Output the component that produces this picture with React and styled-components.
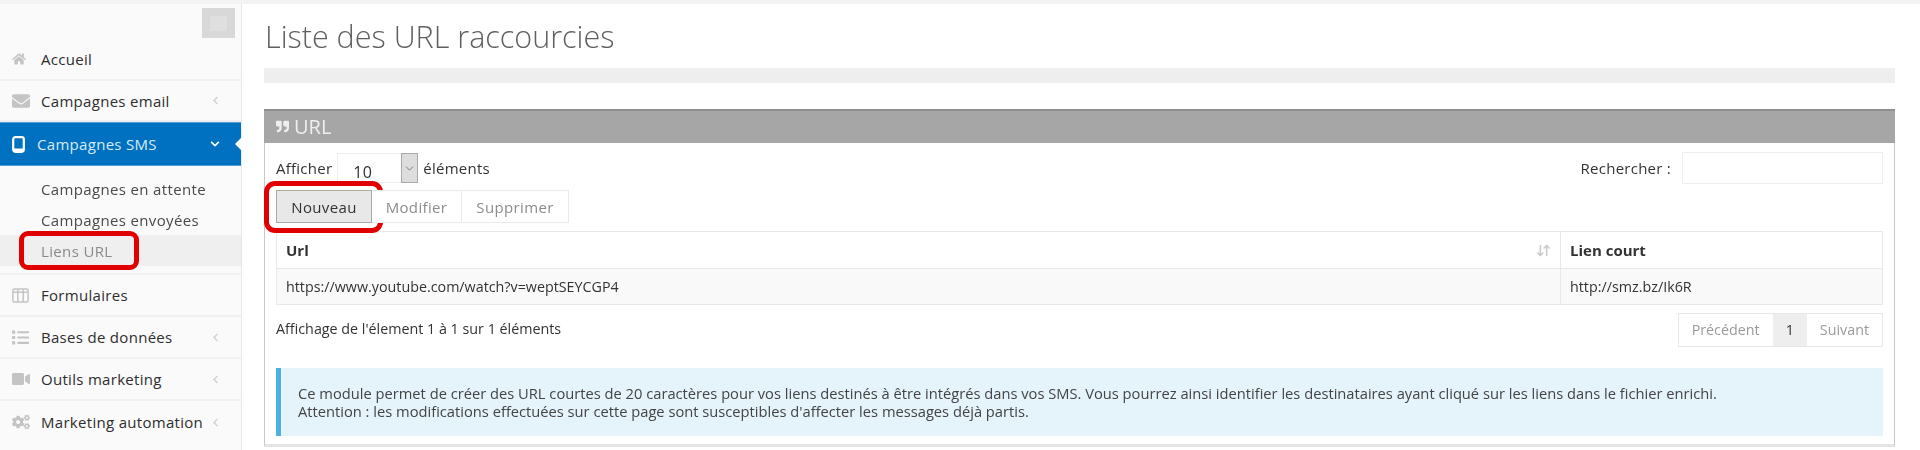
import React from "react";
import styled, { createGlobalStyle } from "styled-components";
import {
  FaHome,
  FaEnvelope,
  FaList,
  FaVideo,
  FaCogs,
  FaQuoteRight,
  FaChevronDown,
  FaChevronLeft,
} from "react-icons/fa";
import { ArrowDownUp, ChevronDown } from "lucide-react";

const GlobalStyle = createGlobalStyle`
  html, body {
    margin: 0;
    padding: 0;
    background: #fff;
    height: 450px;
    overflow: hidden;
  }
  body {
    font-family: "Open Sans", "Liberation Sans", sans-serif;
    font-size: 14.4px;
    color: #333;
  }
`;

function ColumnsIcon({ size }) {
  return (
    <svg width={size} height={size} viewBox="0 0 16 16" fill="none" stroke="currentColor" strokeWidth="1.4">
      <rect x="0.8" y="1.8" width="14.4" height="12.4" rx="1.5" />
      <path d="M5.5 2v12M10.5 2v12M1 5h14" />
    </svg>
  );
}

function PhoneIcon() {
  return (
    <svg width="13" height="17" viewBox="0 0 13 17" fill="none">
      <rect x="1.2" y="1.2" width="10.6" height="14.6" rx="2.2" stroke="#fff" strokeWidth="2.2" />
      <rect x="1" y="12.5" width="11" height="3.5" fill="#fff" />
    </svg>
  );
}

const menu = [
  { label: "Accueil", icon: FaHome, size: 14, height: 43 },
  { label: "Campagnes email", icon: FaEnvelope, size: 18, height: 41, arrow: true },
  { label: "Formulaires", icon: ColumnsIcon, size: 17, height: 42 },
  { label: "Bases de données", icon: FaList, size: 17, height: 42, arrow: true },
  { label: "Outils marketing", icon: FaVideo, size: 18, height: 42, arrow: true },
  { label: "Marketing automation", icon: FaCogs, size: 18, height: 42, arrow: true },
];

export default function App() {
  return (
    <>
      <GlobalStyle />
      <Page>
        <Sidebar>
          <ToggleRow>
            <ToggleButton>
              <ToggleInner />
            </ToggleButton>
          </ToggleRow>
          {menu.slice(0, 2).map((item) => (
            <MenuEntry key={item.label} item={item} />
          ))}
          <ActiveItem>
            <ActiveIcon>
              <PhoneIcon />
            </ActiveIcon>
            <ActiveLabel>Campagnes SMS</ActiveLabel>
            <FaChevronDown size={10} />
          </ActiveItem>
          <SubMenu>
            <SubItem>Campagnes en attente</SubItem>
            <SubItem>Campagnes envoyées</SubItem>
            <SubItem $current>Liens URL</SubItem>
          </SubMenu>
          {menu.slice(2).map((item) => (
            <MenuEntry key={item.label} item={item} />
          ))}
        </Sidebar>
        <Main>
          <Title>Liste des URL raccourcies</Title>
          <Breadcrumb />
          <Portlet>
            <PortletHeader>
              <FaQuoteRight size={13} />
              <span>URL</span>
            </PortletHeader>
            <PortletBody>
              <ControlRow>
                <LengthControl>
                  Afficher
                  <SelectBox>
                    <SelectValue>10</SelectValue>
                    <SelectArrow>
                      <ChevronDown size={13} strokeWidth={1.5} />
                    </SelectArrow>
                  </SelectBox>
                  éléments
                </LengthControl>
                <SearchControl>
                  Rechercher :
                  <SearchInput />
                </SearchControl>
              </ControlRow>
              <ButtonRow>
                <ActionButton $primary>Nouveau</ActionButton>
                <ActionButton $width={90}>Modifier</ActionButton>
                <ActionButton $width={107}>Supprimer</ActionButton>
              </ButtonRow>
              <Table>
                <thead>
                  <tr>
                    <HeadCell>
                      <HeadInner>
                        Url
                        <ArrowDownUp size={15} color="#c9c9c9" strokeWidth={2.5} />
                      </HeadInner>
                    </HeadCell>
                    <HeadCell $short>Lien court</HeadCell>
                  </tr>
                </thead>
                <tbody>
                  <tr>
                    <BodyCell>https://www.youtube.com/watch?v=weptSEYCGP4</BodyCell>
                    <BodyCell $short>http://smz.bz/Ik6R</BodyCell>
                  </tr>
                </tbody>
              </Table>
              <FooterRow>
                <span>Affichage de l'élement 1 à 1 sur 1 éléments</span>
                <Pagination>
                  <PageLink>Précédent</PageLink>
                  <PageLink $current>1</PageLink>
                  <PageLink>Suivant</PageLink>
                </Pagination>
              </FooterRow>
              <Note>
                Ce module permet de créer des URL courtes de 20 caractères pour vos liens destinés à être intégrés dans vos SMS. Vous pourrez ainsi identifier les destinataires ayant cliqué sur les liens dans le fichier enrichi.
                <br />
                Attention : les modifications effectuées sur cette page sont susceptibles d'affecter les messages déjà partis.
              </Note>
            </PortletBody>
          </Portlet>
        </Main>
      </Page>
    </>
  );
}

function MenuEntry({ item }) {
  const Icon = item.icon;
  return (
    <MenuItem $height={item.height}>
      <MenuIcon>
        <Icon size={item.size} />
      </MenuIcon>
      <MenuLabel>{item.label}</MenuLabel>
      {item.arrow && <FaChevronLeft size={9} color="#d0d0d0" />}
    </MenuItem>
  );
}

const Page = styled.div`
  display: flex;
  height: 450px;
  border-top: 4px solid #f3f3f3;
  box-sizing: border-box;
  filter: blur(0.4px);
`;

const Sidebar = styled.nav`
  width: 242px;
  flex: none;
  box-sizing: border-box;
  background: #fafafa;
  border-right: 1px solid #e8e8e8;
  display: flex;
  flex-direction: column;
`;

const ToggleRow = styled.div`
  display: flex;
  justify-content: flex-end;
  padding: 4px 6px 0 0;
  height: 30px;
  box-sizing: content-box;
`;

const ToggleButton = styled.div`
  width: 33px;
  height: 30px;
  background: #d8d8d8;
  display: flex;
  align-items: center;
  justify-content: center;
`;

const ToggleInner = styled.div`
  width: 17px;
  height: 15px;
  background: #dfdfdf;
`;

const MenuItem = styled.div`
  height: ${(p) => p.$height}px;
  flex: none;
  display: flex;
  align-items: center;
  padding: 0 21px 0 12px;
  border-bottom: 2px solid #f0f0f0;
  box-sizing: border-box;
  &:last-child {
    border-bottom: 0;
  }
`;

const MenuIcon = styled.span`
  width: 29px;
  flex: none;
  display: flex;
  color: #c4c4c4;
`;

const MenuLabel = styled.span`
  flex: 1;
  font-size: 15px;
  letter-spacing: 0.3px;
  font-weight: 500;
  color: #2e2e2e;
`;

const ActiveItem = styled.div`
  height: 44px;
  flex: none;
  display: flex;
  align-items: center;
  padding: 0 21px 0 12px;
  background: #0070c0;
  border-top: 1px solid #4f9fd6;
  border-bottom: 1px solid #4f9fd6;
  box-sizing: border-box;
  color: #fff;
  position: relative;
  &::after {
    content: "";
    position: absolute;
    right: -1px;
    top: 14px;
    border: 7px solid transparent;
    border-right: 7px solid #fff;
    border-left: 0;
  }
`;

const ActiveIcon = styled.span`
  width: 25px;
  flex: none;
  display: flex;
`;

const ActiveLabel = styled.span`
  flex: 1;
  font-size: 15px;
  letter-spacing: 0.3px;
  font-weight: 500;
  color: #d8ebf8;
`;

const SubMenu = styled.div`
  padding: 7px 0;
  display: flex;
  flex-direction: column;
  border-bottom: 2px solid #f0f0f0;
`;

const SubItem = styled.div`
  height: 31px;
  display: flex;
  align-items: center;
  padding-left: 41px;
  font-size: 15px;
  letter-spacing: 0.35px;
  font-weight: 500;
  color: ${(p) => (p.$current ? "#8a8a8a" : "#4a4a4a")};
  background: ${(p) => (p.$current ? "#efefef" : "transparent")};
  position: relative;
  ${(p) =>
    p.$current &&
    `&::after {
      content: "";
      position: absolute;
      left: 19px;
      top: -4px;
      width: 120px;
      height: 39px;
      box-sizing: border-box;
      border: 5px solid #e00000;
      border-radius: 9px;
    }`}
`;

const Main = styled.main`
  flex: 1;
  min-width: 0;
  padding: 0 25px 0 22px;
`;

const Title = styled.h1`
  margin: 0;
  height: 64px;
  display: flex;
  align-items: center;
  padding-left: 1px;
  font-size: 30.5px;
  font-weight: 300;
  color: #5f5f5f;
`;

const Breadcrumb = styled.div`
  height: 15px;
  background: #eee;
  margin-bottom: 26px;
`;

const Portlet = styled.section`
  height: 338px;
  box-sizing: border-box;
  border: 1px solid #c8c8c8;
  border-top: 0;
  border-bottom: 3px solid #e4e4e4;
  display: flex;
  flex-direction: column;
`;

const PortletHeader = styled.header`
  height: 34px;
  margin: 0 -1px;
  flex: none;
  box-sizing: border-box;
  background: #a6a6a6;
  border-top: 2px solid #8f8f8f;
  display: flex;
  align-items: center;
  gap: 5px;
  padding: 0 0 2px 12px;
  color: #efefef;
  font-size: 20px;
`;

const PortletBody = styled.div`
  padding: 10px 11px 0;
`;

const ControlRow = styled.div`
  display: flex;
  justify-content: space-between;
  align-items: center;
  height: 30px;
`;

const LengthControl = styled.label`
  display: flex;
  align-items: center;
  gap: 5px;
  font-size: 15px;
  letter-spacing: 0.25px;
`;

const SelectBox = styled.div`
  width: 81px;
  height: 30px;
  display: flex;
  box-sizing: border-box;
  border: 1px solid #eee;
`;

const SelectValue = styled.span`
  flex: 1;
  font-size: 16px;
  padding: 7px 0 0 15px;
`;

const SelectArrow = styled.span`
  width: 17px;
  height: 30px;
  margin: -1px -1px 0 0;
  box-sizing: border-box;
  background: #ddd;
  border: 1px solid #aaa;
  display: flex;
  align-items: center;
  justify-content: center;
  color: #666;
`;

const SearchControl = styled.label`
  display: flex;
  align-items: center;
  gap: 11px;
  font-size: 15px;
  letter-spacing: 0.25px;
`;

const SearchInput = styled.div`
  width: 201px;
  height: 32px;
  box-sizing: border-box;
  border: 1px solid #eee;
`;

const ButtonRow = styled.div`
  display: flex;
  margin-top: 7px;
  height: 33px;
`;

const ActionButton = styled.div`
  width: ${(p) => p.$width || 96}px;
  box-sizing: border-box;
  display: flex;
  align-items: center;
  justify-content: center;
  font-size: 15px;
  letter-spacing: 0.35px;
  position: relative;
  border: 1px solid ${(p) => (p.$primary ? "#aaa" : "#eaeaea")};
  border-left-width: ${(p) => (p.$primary ? 1 : 0)}px;
  background: ${(p) => (p.$primary ? "#e8e8e8" : "#fff")};
  color: ${(p) => (p.$primary ? "#333" : "#8c8c8c")};
  ${(p) =>
    p.$primary &&
    `&::after {
      content: "";
      position: absolute;
      left: -13px;
      top: -10px;
      width: 119px;
      height: 52px;
      box-sizing: border-box;
      border: 5px solid #e00000;
      border-radius: 11px;
    }`}
`;

const Table = styled.table`
  width: 100%;
  margin-top: 8px;
  border-collapse: collapse;
  table-layout: fixed;
  font-size: 14.3px;
`;

const HeadCell = styled.th`
  height: 37px;
  text-align: left;
  padding: 0 9px;
  box-sizing: border-box;
  font-size: 15px;
  font-weight: 700;
  color: #333;
  border: 1px solid #e8e8e8;
  width: ${(p) => (p.$short ? "322px" : "auto")};
`;

const HeadInner = styled.div`
  display: flex;
  justify-content: space-between;
  align-items: center;
`;

const BodyCell = styled.td`
  height: 36px;
  padding: 0 9px;
  box-sizing: border-box;
  background: #f9f9f9;
  border: 1px solid #e8e8e8;
  color: #333;
`;

const FooterRow = styled.div`
  display: flex;
  justify-content: space-between;
  align-items: flex-start;
  margin-top: 8px;
  font-size: 14.3px;
  line-height: 32px;
`;

const Pagination = styled.div`
  display: flex;
  height: 34px;
  border: 1px solid #e8e8e8;
  box-sizing: border-box;
  line-height: 32px;
`;

const PageLink = styled.div`
  padding: 0 13px;
  color: ${(p) => (p.$current ? "#333" : "#9a9a9a")};
  background: ${(p) => (p.$current ? "#eee" : "#fff")};
`;

const Note = styled.div`
  margin-top: 21px;
  height: 68px;
  box-sizing: border-box;
  padding: 16px 17px;
  background: #e5f3fb;
  border-left: 5px solid #4eb0dc;
  font-size: 14.7px;
  line-height: 18px;
  color: #444;
`;
